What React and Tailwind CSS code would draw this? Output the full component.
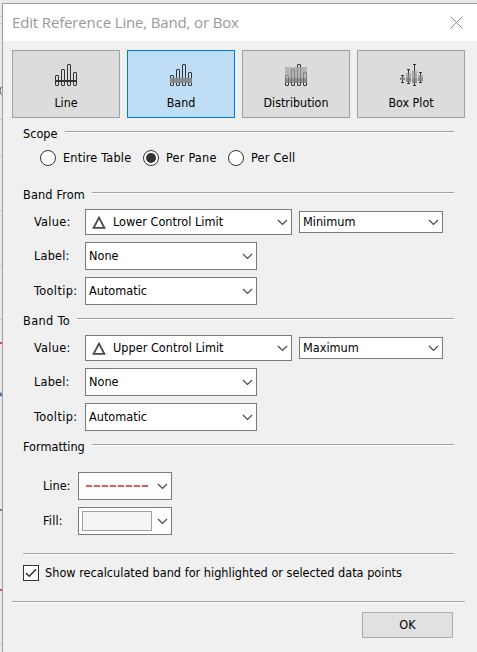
import React from "react";

function Chevron() {
  return (
    <svg width="11" height="7" viewBox="0 0 11 7" className="shrink-0" fill="none" stroke="#444" strokeWidth="1.1">
      <path d="M1 1 L5.5 5.4 L10 1" />
    </svg>
  );
}

function Bars({ stroke = "#333" }) {
  return (
    <g fill="none" stroke={stroke}>
      <rect x="0.5" y="11.5" width="3" height="10" rx="0.5" />
      <rect x="6.5" y="5.5" width="3" height="16" rx="0.5" />
      <rect x="12.5" y="0.5" width="3" height="21" rx="0.5" />
      <rect x="18.5" y="8.5" width="3" height="13" rx="0.5" />
    </g>
  );
}

function LineIcon() {
  return (
    <svg width="22" height="22" viewBox="0 0 22 22">
      <Bars />
      <rect x="0" y="16" width="22" height="2" fill="#333" />
    </svg>
  );
}

function BandIcon() {
  return (
    <svg width="22" height="22" viewBox="0 0 22 22">
      <Bars />
      <rect x="0" y="14" width="22" height="5" fill="#888" fillOpacity="0.9" />
    </svg>
  );
}

function DistributionIcon() {
  return (
    <svg width="22" height="22" viewBox="0 0 22 22">
      <Bars />
      <rect x="0" y="3" width="22" height="11" fill="#a4a4a4" fillOpacity="0.7" />
      <rect x="0" y="14" width="22" height="5" fill="#808080" fillOpacity="0.8" />
    </svg>
  );
}

const BOXES = [
  { x: 0, w: 5, top: 13, mid: 14, bottom: 16, low: 11, high: 18 },
  { x: 6, w: 5, top: 9, mid: 14, bottom: 18, low: 5, high: 19 },
  { x: 12, w: 5, top: 7, mid: 14, bottom: 19, low: 0, high: 21 },
  { x: 18, w: 5, top: 11, mid: 14, bottom: 17, low: 8, high: 18 },
];

function BoxPlotIcon() {
  return (
    <svg width="23" height="22" viewBox="0 0 23 22" shapeRendering="crispEdges">
      {BOXES.map((b) => (
        <g key={b.x}>
          <rect x={b.x} y={b.top} width={b.w} height={b.mid - b.top} fill="#aaa" />
          <rect x={b.x} y={b.mid} width={b.w} height={b.bottom - b.mid} fill="#8c8c8c" />
          <rect x={b.x + 2} y={b.low} width="1" height={b.top - b.low} fill="#333" />
          <rect x={b.x + 2} y={b.top} width="1" height={b.bottom - b.top} fill="#777" />
          <rect x={b.x + 2} y={b.bottom} width="1" height={b.high - b.bottom} fill="#333" />
          <rect x={b.x + 1} y={b.low} width="3" height="1" fill="#333" />
          <rect x={b.x + 1} y={b.high} width="3" height="1" fill="#333" />
        </g>
      ))}
    </svg>
  );
}

function Tab({ icon, label, active }) {
  return (
    <button
      className={
        "flex h-[68px] w-[108px] flex-col items-center border pt-[13px] text-[12.4px] " +
        (active ? "border-[#0078d7] bg-[#bfddf5]" : "border-[#a0a0a0] bg-[#dcdcdc]")
      }
    >
      {icon}
      <span className="mt-[9px] leading-4">{label}</span>
    </button>
  );
}

function Rule() {
  return <div className="h-[2px] flex-1 border-b border-white bg-[#a0a0a0]" />;
}

function Section({ title, className = "" }) {
  return (
    <div className="flex h-4 gap-[7px] pl-[20px] pr-[23px]">
      <span className={"leading-4 " + className}>{title}</span>
      <div className="flex flex-1 items-start pt-[5px]">
        <Rule />
      </div>
    </div>
  );
}

function Radio({ label, checked }) {
  return (
    <label className="flex items-center gap-[7px]">
      <span className="flex size-4 items-center justify-center rounded-full border border-[#333] bg-white">
        {checked && <span className="size-[10px] rounded-full bg-[#333]" />}
      </span>
      <span className="leading-4 tracking-[0.2px]">{label}</span>
    </label>
  );
}

function Select({ value, className, measure }) {
  return (
    <div className={"flex items-center border border-[#7a7a7a] bg-white pl-[3px] pr-[3px] " + className}>
      {measure && (
        <svg width="14" height="13" viewBox="0 0 14 13" className="ml-[3px] mr-[7px]" fill="none" stroke="#484848" strokeWidth="1.8">
          <path d="M7 1.6 L12.4 11.9 H1.6 Z" />
        </svg>
      )}
      <span className="flex-1 leading-4">{value}</span>
      <Chevron />
    </div>
  );
}

function Band({ title, titleClass, limit, aggregate }) {
  return (
    <div className="h-[126px]">
      <Section title={title} className={titleClass} />
      <div className="mt-[6px] flex h-[26px] items-center pl-[31px]">
        <span className="w-[51px] leading-4 tracking-[0.3px]">Value:</span>
        <Select value={limit} measure className="h-[26px] w-[207px]" />
        <Select value={aggregate} className="ml-[7px] h-[22px] w-[144px]" />
      </div>
      <div className="mt-[7px] flex items-center pl-[31px]">
        <span className="w-[51px] leading-4 tracking-[0.2px]">Label:</span>
        <Select value="None" className="h-[28px] w-[172px]" />
      </div>
      <div className="mt-[7px] flex items-center pl-[31px]">
        <span className="w-[51px] leading-4 tracking-[0.4px]">Tooltip:</span>
        <Select value="Automatic" className="h-[28px] w-[172px]" />
      </div>
    </div>
  );
}

function Backdrop() {
  return (
    <svg width="2" height="652" viewBox="0 0 2 652" className="shrink-0">
      <rect width="2" height="652" fill="#e9e9e9" />
      <path d="M0 16.5H2M0 23.5H2M0 119.5H2M0 156.5H2M0 210.5H2M0 265.5H2M0 319.5H2M0 644.5H2" stroke="#ccc" />
      <path d="M2 87 Q0 87 0 90.5 T2 95" fill="none" stroke="#555" />
      <path d="M0 343H2M0 590H2" stroke="#c94f50" strokeWidth="2" />
      <path d="M0 396 L2 393" stroke="#4e79a7" strokeWidth="3" />
      <path d="M0 510H2" stroke="#777" strokeWidth="2" />
    </svg>
  );
}

export default function App() {
  return (
    <div className="flex h-[652px] w-[477px] overflow-hidden bg-[#e9e9e9] font-['DejaVu_Sans_Condensed','DejaVu_Sans',sans-serif] text-[12.6px] text-black [font-stretch:condensed]">
      <Backdrop />
      <div className="mt-[3px] flex-1 whitespace-nowrap border-l border-t border-[#a0a0a0] bg-[#f0f0f0]">
        <div className="flex h-[37px] items-center justify-between bg-white pl-[9px] pr-[14px] text-[#999]">
          <span className="-mt-[2px] font-['Open_Sans','Noto_Sans',sans-serif] text-[15px] leading-5 tracking-[-0.15px] [font-stretch:normal]">
            Edit Reference Line, Band, or Box
          </span>
          <svg width="13" height="13" viewBox="0 0 13 13" stroke="#888" fill="none">
            <path d="M0.5 0.5 L12.5 12.5 M12.5 0.5 L0.5 12.5" />
          </svg>
        </div>
        <div className="flex gap-[7px] pl-[9px] pt-[9px]">
          <Tab icon={<LineIcon />} label="Line" />
          <Tab icon={<BandIcon />} label="Band" active />
          <Tab icon={<DistributionIcon />} label="Distribution" />
          <Tab icon={<BoxPlotIcon />} label="Box Plot" />
        </div>
        <div className="h-[8px]" />
        <Section title="Scope" />
        <div className="mt-[8px] flex h-4 pl-[37px]">
          <div className="w-[103px]"><Radio label="Entire Table" /></div>
          <div className="w-[85px]"><Radio label="Per Pane" checked /></div>
          <Radio label="Per Cell" />
        </div>
        <div className="h-[21px]" />
        <Band title="Band From" titleClass="tracking-[0.15px]" limit="Lower Control Limit" aggregate="Minimum" />
        <Band title="Band To" titleClass="tracking-[0.4px]" limit="Upper Control Limit" aggregate="Maximum" />
        <Section title="Formatting" />
        <div className="mt-[17px] flex items-center pl-[40px]">
          <span className="w-[35px] leading-4">Line:</span>
          <div className="flex h-[28px] w-[94px] items-center justify-between border border-[#7a7a7a] bg-white pl-[7px] pr-[3px]">
            <svg width="63" height="2" viewBox="0 0 63 2">
              <path d="M0 1H62" stroke="#e15759" strokeWidth="2" strokeDasharray="6 2" />
            </svg>
            <Chevron />
          </div>
        </div>
        <div className="mt-[7px] flex items-center pl-[40px]">
          <span className="w-[35px] leading-4 tracking-[0.2px]">Fill:</span>
          <div className="flex h-[28px] w-[94px] items-center justify-between border border-[#7a7a7a] bg-white pl-[3px] pr-[3px]">
            <div className="h-5 w-[70px] border border-[#a0a0a0] bg-[#f4f4f4]" />
            <Chevron />
          </div>
        </div>
        <div className="mt-[18px] flex pl-[20px] pr-[23px]"><Rule /></div>
        <div className="mt-[10px] flex h-4 items-center gap-[6px] pl-[20px]">
          <span className="flex size-4 items-center justify-center border border-[#333] bg-white">
            <svg width="12" height="10" viewBox="0 0 12 10" fill="none" stroke="#333" strokeWidth="1.6">
              <path d="M1 5 L4.3 8.2 L11 1.3" />
            </svg>
          </span>
          <span className="leading-4">Show recalculated band for highlighted or selected data points</span>
        </div>
        <div className="mt-[20px] flex pl-[9px] pr-[12px]"><Rule /></div>
        <div className="mt-[9px] flex justify-end pr-[24px]">
          <button className="h-[26px] w-[91px] border border-[#adadad] bg-[#e1e1e1]">OK</button>
        </div>
      </div>
    </div>
  );
}
